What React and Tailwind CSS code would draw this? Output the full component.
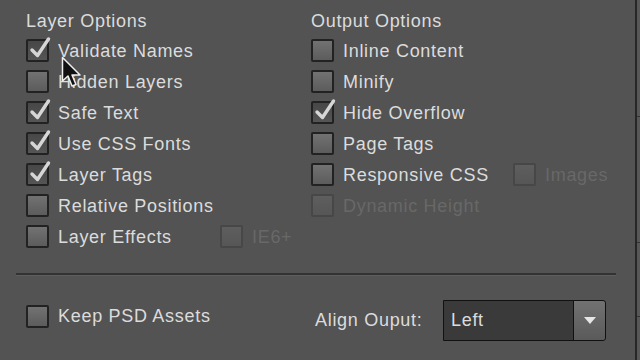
import React from "react";

const font = { fontFamily: '"Liberation Sans", Arial, sans-serif' };

function Box({ checked, disabled }) {
  return (
    <div
      className={
        "relative w-[23px] h-[23px] shrink-0 rounded-[2px] border-2 " +
        (disabled
          ? "border-[#474747] bg-gradient-to-b from-[#5e5e5e] to-[#565656]"
          : checked
          ? "border-[#222222] bg-gradient-to-b from-[#474747] to-[#555555]"
          : "border-[#222222] bg-gradient-to-b from-[#727272] to-[#5c5c5c]")
      }
    >
      {checked && (
        <svg
          className="absolute left-[1px] top-[-5px]"
          width="22"
          height="24"
          viewBox="0 0 22 24"
        >
          <path
            d="M3 14 L8.5 19.5 L19.5 3"
            fill="none"
            stroke="#d6d6d6"
            strokeWidth="3.4"
            strokeLinecap="round"
            strokeLinejoin="round"
          />
        </svg>
      )}
    </div>
  );
}

function Opt({ label, checked, disabled, extra }) {
  return (
    <div className="flex items-center h-[31px]">
      <Box checked={checked} disabled={disabled} />
      <span
        className={
          "ml-[9px] text-[18px] tracking-[0.7px] leading-none " +
          (disabled ? "text-[#686868]" : "text-[#dcdcdc]")
        }
      >
        {label}
      </span>
      {extra}
    </div>
  );
}

export default function App() {
  return (
    <div
      className="w-[640px] h-[360px] bg-[#535353] flex overflow-hidden relative"
      style={font}
    >
      <div className="w-[635px] flex flex-col">
        <div className="flex pt-[8px] pl-[26px]">
          <div className="w-[285px] flex flex-col">
            <div className="h-[27px] flex items-center text-[18px] tracking-[0.7px] text-[#dcdcdc]">
              Layer Options
            </div>
            <Opt label="Validate Names" checked />
            <Opt label="Hidden Layers" />
            <Opt label="Safe Text" checked />
            <Opt label="Use CSS Fonts" checked />
            <Opt label="Layer Tags" checked />
            <Opt label="Relative Positions" />
            <div className="flex items-center h-[31px]">
              <Box />
              <span className="ml-[9px] w-[162px] text-[18px] tracking-[0.7px] leading-none text-[#dcdcdc]">
                Layer Effects
              </span>
              <Box disabled />
              <span className="ml-[9px] text-[18px] tracking-[0.7px] leading-none text-[#686868]">
                IE6+
              </span>
            </div>
          </div>
          <div className="flex flex-col">
            <div className="h-[27px] flex items-center text-[18px] tracking-[0.7px] text-[#dcdcdc]">
              Output Options
            </div>
            <Opt label="Inline Content" />
            <Opt label="Minify" />
            <Opt label="Hide Overflow" checked />
            <Opt label="Page Tags" />
            <div className="flex items-center h-[31px]">
              <Box />
              <span className="ml-[9px] w-[170px] text-[18px] tracking-[0.7px] leading-none text-[#dcdcdc]">
                Responsive CSS
              </span>
              <Box disabled />
              <span className="ml-[9px] text-[18px] tracking-[0.7px] leading-none text-[#686868]">
                Images
              </span>
            </div>
            <Opt label="Dynamic Height" disabled />
          </div>
        </div>
        <div className="ml-[16px] w-[600px] mt-[21px] h-[2px] border-t-2 border-[#333333]" />
        <div className="ml-[16px] w-[600px] h-[1px] bg-[#5e5e5e]" />
        <div className="flex items-center pl-[26px] mt-[24px]">
          <div className="w-[285px] flex items-center h-[31px] -mt-[9px]">
            <Box />
            <span className="ml-[9px] text-[18px] tracking-[0.7px] leading-none text-[#dcdcdc]">
              Keep PSD Assets
            </span>
          </div>
          <span className="ml-[4px] w-[128px] text-[18px] tracking-[0.7px] text-[#dcdcdc]">
            Align Ouput:
          </span>
          <div className="flex h-[41px] w-[163px] border border-[#111111] rounded-r-[3px]">
            <div className="flex-1 bg-[#3a3a3a] flex items-center pl-[7px] text-[18px] tracking-[0.7px] text-[#dcdcdc] border-r border-[#111111]">
              Left
            </div>
            <div className="w-[31px] flex items-center justify-center bg-gradient-to-b from-[#727272] to-[#5a5a5a] rounded-r-[3px]">
              <svg width="12" height="7" viewBox="0 0 12 7">
                <path d="M0 0 L12 0 L6 7 Z" fill="#e6e6e6" />
              </svg>
            </div>
          </div>
        </div>
      </div>
      <div className="w-[2px] bg-[#262626]" />
      <div className="flex-1 bg-[#575757] flex flex-col">
        <div className="h-[116px]" />
        <div className="h-[1px] bg-[#333333]" />
        <div className="h-[125px]" />
        <div className="h-[1px] bg-[#333333]" />
        <div className="h-[73px]" />
        <div className="h-[1px] bg-[#333333]" />
      </div>
      <svg
        className="absolute left-[61px] top-[56px]"
        width="22"
        height="34"
        viewBox="0 0 22 34"
      >
        <path
          d="M1.5 1.5 L1.5 25 L7 20 L11 30 L15 28.5 L11 19 L19 19 Z"
          fill="#111111"
          stroke="#f0f0f0"
          strokeWidth="1.5"
          strokeLinejoin="round"
        />
      </svg>
    </div>
  );
}
